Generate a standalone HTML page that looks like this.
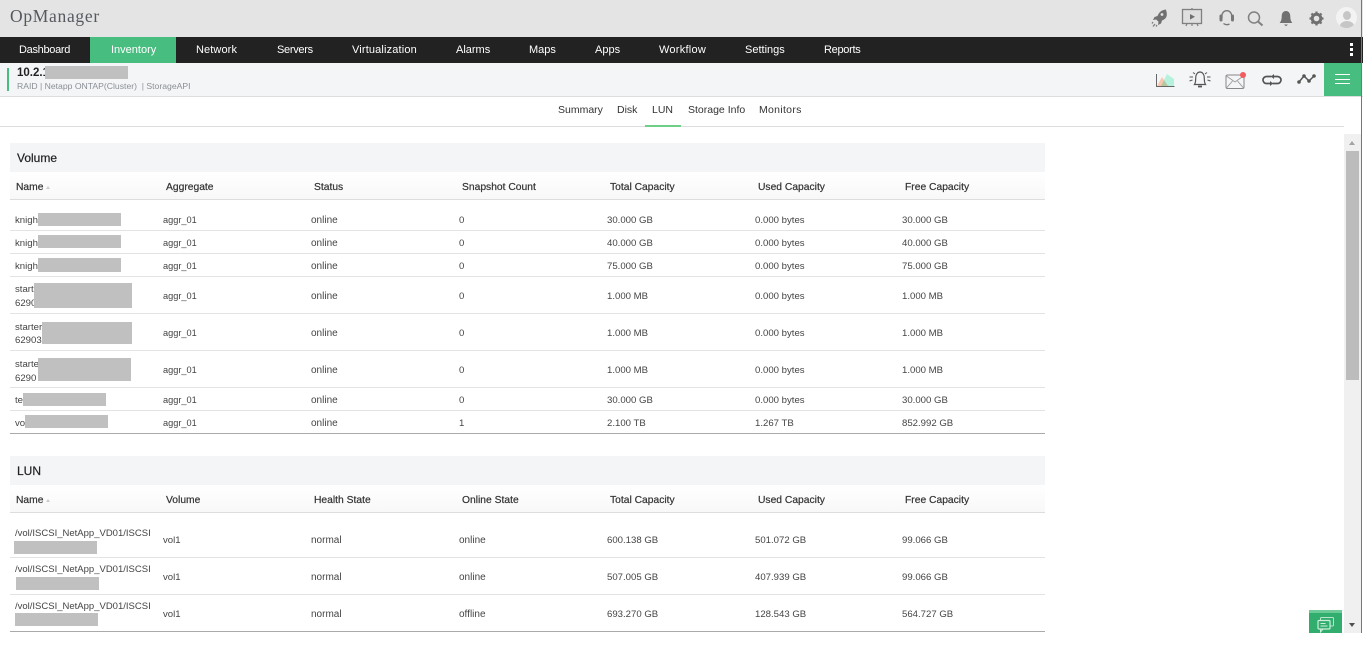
<!DOCTYPE html>
<html><head><meta charset="utf-8"><title>OpManager</title>
<style>
*{box-sizing:border-box}
html,body{margin:0;padding:0;width:1363px;height:670px;overflow:hidden;background:#fff}
body{position:relative;font-family:"Liberation Sans",sans-serif;color:#333}
.a{position:absolute;white-space:nowrap}
.b{position:absolute}
.nav{position:absolute;top:38px;height:26px;line-height:24px;font-size:11px;color:#fff;white-space:nowrap}
.t{position:absolute;font-size:9.6px;line-height:14px;color:#444;white-space:nowrap;margin-top:2px}
.t.o{font-size:10px}
.t.x{font-size:9.2px;margin-top:1px}
.t.l{font-size:9.5px;margin-top:1px}
.h{position:absolute;font-size:10.3px;line-height:14px;font-weight:400;color:#333;white-space:nowrap;-webkit-text-stroke:.2px #333;margin-top:2px}
.r{position:absolute;left:10px;width:1035px;height:1px;background:#e3e3e3}
.g{position:absolute;background:#c0c0c0}
.tab{position:absolute;top:103px;font-size:10.5px;line-height:14px;color:#333;white-space:nowrap}
</style></head><body>
<div class="b" style="left:0;top:0;width:1363px;height:37px;background:#e4e4e4"></div>
<div class="a" style="left:10px;top:6px;font:17.5px/21px 'Liberation Serif',serif;color:#55595f;letter-spacing:.7px">OpManager</div>

<svg class="b" style="left:1150px;top:6px" width="190" height="26" viewBox="0 0 190 26">
<path d="M16 3.500c-4 .3-7 2.500-8.500 6.500l-3 1-1.500 3 3.200-.5 2.300 2.300-.5 3.200 3-1.500 1-3c4-1.500 6.200-4.500 4-10.500z" fill="#707070"/>
<circle cx="12" cy="8.500" r="1.400" fill="#e4e4e4"/>
<path d="M3 16l-1 1.500M5 18l-2 2.500M7 19l-1 1.500" stroke="#808080" stroke-width="1.300" fill="none"/>
<rect x="32.500" y="3.500" width="19" height="14" fill="#dfdfdf" stroke="#808080" stroke-width="1.300"/>
<path d="M42 2v1.500M37 17.500l-1 2.500M47 17.500l1 2.500M42 17.500v2.500" stroke="#808080" stroke-width="1.200"/>
<path d="M40 8l5 2.800-5 2.800z" fill="#707070"/>
<path d="M72 12v-2.500a4.800 4.800 0 0 1 9.600 0v2.500" stroke="#777" stroke-width="1.300" fill="none"/>
<rect x="69.500" y="8.500" width="3" height="7" rx="1.500" fill="#777"/><rect x="81" y="8.500" width="3" height="7" rx="1.500" fill="#777"/>
<path d="M73.500 17.500c2 1.500 4 1.500 6 .5" stroke="#777" stroke-width="1.300" fill="none"/>
<circle cx="104" cy="11.500" r="5.500" fill="none" stroke="#808080" stroke-width="1.500"/>
<path d="M108 15.500l4.500 4" stroke="#808080" stroke-width="2"/>
<path d="M136 5c-3 0-4.300 2.500-4.300 5.500 0 3.500-1 5-2 6.500h12.600c-1-1.500-2-3-2-6.500 0-3-1.300-5.500-4.300-5.500z" fill="#707070"/>
<path d="M134 18.500h4l-2 1.800z" fill="#707070"/>
<circle cx="166.500" cy="12.500" r="4.300" fill="none" stroke="#707070" stroke-width="3"/>
<path d="M166.500 5.500v3M166.500 16.500v3M159.500 12.500h3M170.500 12.500h3M161.500 7.500l2.100 2.100M169.400 15.400l2.100 2.100M161.500 17.500l2.100-2.100M169.400 9.600l2.100-2.100" stroke="#707070" stroke-width="2.200"/>
</svg>
<div class="b" style="left:1336px;top:7px;width:21px;height:21px;border-radius:50%;background:#f3f3f3;overflow:hidden">
<div class="b" style="left:6.500px;top:4px;width:8px;height:9px;border-radius:50%;background:#c6c6c6"></div>
<div class="b" style="left:3.500px;top:14px;width:14px;height:10px;border-radius:50% 50% 0 0;background:#c6c6c6"></div>
</div>

<div class="b" style="left:0;top:37px;width:1363px;height:26px;background:#222"></div>
<div class="b" style="left:90px;top:37px;width:86px;height:26px;background:#48bd80"></div>
<div class="nav" style="left:19px;letter-spacing:-.3px">Dashboard</div>
<div class="nav" style="left:111px">Inventory</div>
<div class="nav" style="left:196px;letter-spacing:.1px">Network</div>
<div class="nav" style="left:277px;letter-spacing:-.3px">Servers</div>
<div class="nav" style="left:352px;letter-spacing:.15px">Virtualization</div>
<div class="nav" style="left:456px">Alarms</div>
<div class="nav" style="left:529px">Maps</div>
<div class="nav" style="left:595px">Apps</div>
<div class="nav" style="left:659px;letter-spacing:.25px">Workflow</div>
<div class="nav" style="left:745px">Settings</div>
<div class="nav" style="left:824px;letter-spacing:-.3px">Reports</div>
<div class="b" style="left:1350px;top:43px;width:3px;height:3px;background:#fff"></div>
<div class="b" style="left:1350px;top:48px;width:3px;height:3px;background:#fff"></div>
<div class="b" style="left:1350px;top:53px;width:3px;height:3px;background:#fff"></div>

<div class="b" style="left:0;top:63px;width:1363px;height:34px;background:#f4f5f7;border-bottom:1px solid #ddd"></div>
<div class="b" style="left:7px;top:68px;width:2px;height:23px;background:#48bd80"></div>
<div class="a" style="left:17px;top:66px;font-size:11.5px;line-height:14px;font-weight:bold;color:#222">10.2.1</div>
<div class="g" style="left:45px;top:66px;width:83px;height:13px"></div>
<div class="a" style="left:17px;top:80px;font-size:8.65px;line-height:13px;color:#8a8f94">RAID | Netapp ONTAP(Cluster) &nbsp;| StorageAPI</div>

<svg class="b" style="left:1150px;top:66px" width="170" height="30" viewBox="0 0 170 30">
<path d="M7 20l5-9 6 9z" fill="#f9c8ae"/><path d="M11 20l6-12 7 5v7z" fill="#b5f2dd"/><path d="M11 20l3-6 4 6z" fill="#b8c5a0"/>
<path d="M6.500 8v12.500H24.500" stroke="#666" stroke-width="1" fill="none"/>
<path d="M44.500 18.500c1-1.500 1.200-3 1.200-6.500 0-3.500 1.800-6 4.300-6s4.300 2.500 4.300 6c0 3.500.2 5 1.200 6.500z" fill="none" stroke="#555" stroke-width="1.200"/>
<path d="M48 20.500h4" stroke="#555" stroke-width="1.800"/>
<path d="M39.500 11h3.500M39.500 15l3-1M57 11h3.500M57.500 14l3 1M43 6.500l2 1.500M57 6.500l-2 1.500" stroke="#555" stroke-width="1"/>
<rect x="76" y="9" width="18" height="13.500" rx="1.500" fill="none" stroke="#888" stroke-width="1"/>
<path d="M76.500 10l8.500 6 8.500-6M76.500 22l6-7M93.500 22l-6-7" fill="none" stroke="#999" stroke-width=".9"/>
<circle cx="93" cy="9" r="3" fill="#f45b5f"/>
<path d="M123 10.500h4.500a3.500 3.500 0 0 1 0 7h-5M120 17.500h-3.500a3.500 3.500 0 0 1 0-7h5" fill="none" stroke="#555" stroke-width="1.700"/>
<path d="M124 8v5l-3-2.500zM120 15v5l3-2.500z" fill="#555"/>
<path d="M149 16l5-6 5 5 5-5" fill="none" stroke="#555" stroke-width="1.500"/>
<circle cx="149" cy="16" r="1.800" fill="#555"/><circle cx="154" cy="10" r="1.800" fill="#555"/><circle cx="159" cy="15" r="1.800" fill="#555"/><circle cx="164" cy="10" r="1.800" fill="#555"/>
</svg>
<div class="b" style="left:1324px;top:63px;width:37px;height:33px;background:#48bd80"></div>
<div class="b" style="left:1335px;top:74px;width:15px;height:1px;background:#fff"></div>
<div class="b" style="left:1335px;top:79px;width:15px;height:1px;background:#fff"></div>
<div class="b" style="left:1335px;top:83px;width:15px;height:1px;background:#fff"></div>

<div class="tab" style="left:558px">Summary</div>
<div class="tab" style="left:617px">Disk</div>
<div class="tab" style="left:652px">LUN</div>
<div class="tab" style="left:688px">Storage Info</div>
<div class="tab" style="left:759px;letter-spacing:.3px">Monitors</div>
<div class="b" style="left:0;top:126px;width:1344px;height:1px;background:#ddd"></div>
<div class="b" style="left:645px;top:125px;width:36px;height:2px;background:#6fcf86"></div>

<!-- Volume -->
<div class="b" style="left:10px;top:143px;width:1035px;height:29px;background:#f4f5f7"></div>
<div class="a" style="left:17px;top:151px;font-size:12px;line-height:15px;color:#222;-webkit-text-stroke:.2px #222">Volume</div>
<div class="b" style="left:10px;top:172px;width:1035px;height:27px;background:linear-gradient(#fff,#f8f8f8)"></div>
<div class="b" style="left:10px;top:199px;width:1035px;height:1px;background:#ddd"></div>
<div class="h" style="left:16px;top:179px">Name</div>
<div class="b" style="left:46px;top:186px;border:2.5px solid transparent;border-top:0;border-bottom:3px solid #ccc"></div>
<div class="h" style="left:166px;top:179px">Aggregate</div>
<div class="h" style="left:314px;top:179px">Status</div>
<div class="h" style="left:462px;top:179px">Snapshot Count</div>
<div class="h" style="left:610px;top:179px">Total Capacity</div>
<div class="h" style="left:758px;top:179px">Used Capacity</div>
<div class="h" style="left:905px;top:179px">Free Capacity</div>

<div class="t" style="left:15px;top:212px">knight</div><div class="g" style="left:38px;top:213px;width:83px;height:13px"></div>
<div class="t x" style="left:163px;top:212px">aggr_01</div><div class="t o" style="left:311px;top:212px">online</div><div class="t" style="left:459px;top:212px">0</div><div class="t" style="left:607px;top:212px">30.000 GB</div><div class="t" style="left:755px;top:212px">0.000 bytes</div><div class="t" style="left:902px;top:212px">30.000 GB</div>
<div class="r" style="top:230px"></div>

<div class="t" style="left:15px;top:235px">knight</div><div class="g" style="left:38px;top:235px;width:83px;height:13px"></div>
<div class="t x" style="left:163px;top:235px">aggr_01</div><div class="t o" style="left:311px;top:235px">online</div><div class="t" style="left:459px;top:235px">0</div><div class="t" style="left:607px;top:235px">40.000 GB</div><div class="t" style="left:755px;top:235px">0.000 bytes</div><div class="t" style="left:902px;top:235px">40.000 GB</div>
<div class="r" style="top:253px"></div>

<div class="t" style="left:15px;top:258px">knight</div><div class="g" style="left:38px;top:258px;width:83px;height:14px"></div>
<div class="t x" style="left:163px;top:258px">aggr_01</div><div class="t o" style="left:311px;top:258px">online</div><div class="t" style="left:459px;top:258px">0</div><div class="t" style="left:607px;top:258px">75.000 GB</div><div class="t" style="left:755px;top:258px">0.000 bytes</div><div class="t" style="left:902px;top:258px">75.000 GB</div>
<div class="r" style="top:276px"></div>

<div class="t" style="left:15px;top:281px">starter</div><div class="t" style="left:15px;top:295px">62903</div><div class="g" style="left:34px;top:283px;width:98px;height:25px"></div>
<div class="t x" style="left:163px;top:288px">aggr_01</div><div class="t o" style="left:311px;top:288px">online</div><div class="t" style="left:459px;top:288px">0</div><div class="t" style="left:607px;top:288px">1.000 MB</div><div class="t" style="left:755px;top:288px">0.000 bytes</div><div class="t" style="left:902px;top:288px">1.000 MB</div>
<div class="r" style="top:313px"></div>

<div class="t" style="left:15px;top:319px">starter</div><div class="t" style="left:15px;top:332px">62903</div><div class="g" style="left:42px;top:322px;width:90px;height:22px"></div>
<div class="t x" style="left:163px;top:325px">aggr_01</div><div class="t o" style="left:311px;top:325px">online</div><div class="t" style="left:459px;top:325px">0</div><div class="t" style="left:607px;top:325px">1.000 MB</div><div class="t" style="left:755px;top:325px">0.000 bytes</div><div class="t" style="left:902px;top:325px">1.000 MB</div>
<div class="r" style="top:350px"></div>

<div class="t" style="left:15px;top:356px">starter</div><div class="t" style="left:15px;top:370px">6290</div><div class="g" style="left:38px;top:358px;width:93px;height:23px"></div>
<div class="t x" style="left:163px;top:362px">aggr_01</div><div class="t o" style="left:311px;top:362px">online</div><div class="t" style="left:459px;top:362px">0</div><div class="t" style="left:607px;top:362px">1.000 MB</div><div class="t" style="left:755px;top:362px">0.000 bytes</div><div class="t" style="left:902px;top:362px">1.000 MB</div>
<div class="r" style="top:387px"></div>

<div class="t" style="left:15px;top:392px">te</div><div class="g" style="left:23px;top:393px;width:83px;height:13px"></div>
<div class="t x" style="left:163px;top:392px">aggr_01</div><div class="t o" style="left:311px;top:392px">online</div><div class="t" style="left:459px;top:392px">0</div><div class="t" style="left:607px;top:392px">30.000 GB</div><div class="t" style="left:755px;top:392px">0.000 bytes</div><div class="t" style="left:902px;top:392px">30.000 GB</div>
<div class="r" style="top:410px"></div>

<div class="t" style="left:15px;top:415px">vol</div><div class="g" style="left:25px;top:415px;width:83px;height:13px"></div>
<div class="t x" style="left:163px;top:415px">aggr_01</div><div class="t o" style="left:311px;top:415px">online</div><div class="t" style="left:459px;top:415px">1</div><div class="t" style="left:607px;top:415px">2.100 TB</div><div class="t" style="left:755px;top:415px">1.267 TB</div><div class="t" style="left:902px;top:415px">852.992 GB</div>
<div class="r" style="top:433px;background:#aaa"></div>

<!-- LUN -->
<div class="b" style="left:10px;top:456px;width:1035px;height:29px;background:#f4f5f7"></div>
<div class="a" style="left:17px;top:464px;font-size:12px;line-height:15px;color:#222;-webkit-text-stroke:.2px #222">LUN</div>
<div class="b" style="left:10px;top:485px;width:1035px;height:27px;background:linear-gradient(#fff,#f8f8f8)"></div>
<div class="b" style="left:10px;top:512px;width:1035px;height:1px;background:#ddd"></div>
<div class="h" style="left:16px;top:492px">Name</div>
<div class="b" style="left:46px;top:499px;border:2.5px solid transparent;border-top:0;border-bottom:3px solid #ccc"></div>
<div class="h" style="left:166px;top:492px">Volume</div>
<div class="h" style="left:314px;top:492px">Health State</div>
<div class="h" style="left:462px;top:492px">Online State</div>
<div class="h" style="left:610px;top:492px">Total Capacity</div>
<div class="h" style="left:758px;top:492px">Used Capacity</div>
<div class="h" style="left:905px;top:492px">Free Capacity</div>

<div class="t l" style="left:15px;top:526px">/vol/ISCSI_NetApp_VD01/ISCSI</div><div class="g" style="left:14px;top:541px;width:83px;height:13px"></div>
<div class="t" style="left:163px;top:532px">vol1</div><div class="t o" style="left:311px;top:532px">normal</div><div class="t o" style="left:459px;top:532px">online</div><div class="t" style="left:607px;top:532px">600.138 GB</div><div class="t" style="left:755px;top:532px">501.072 GB</div><div class="t" style="left:902px;top:532px">99.066 GB</div>
<div class="r" style="top:557px"></div>

<div class="t l" style="left:15px;top:562px">/vol/ISCSI_NetApp_VD01/ISCSI</div><div class="g" style="left:16px;top:577px;width:83px;height:13px"></div>
<div class="t" style="left:163px;top:569px">vol1</div><div class="t o" style="left:311px;top:569px">normal</div><div class="t o" style="left:459px;top:569px">online</div><div class="t" style="left:607px;top:569px">507.005 GB</div><div class="t" style="left:755px;top:569px">407.939 GB</div><div class="t" style="left:902px;top:569px">99.066 GB</div>
<div class="r" style="top:594px"></div>

<div class="t l" style="left:15px;top:599px">/vol/ISCSI_NetApp_VD01/ISCSI</div><div class="g" style="left:15px;top:613px;width:83px;height:13px"></div>
<div class="t" style="left:163px;top:606px">vol1</div><div class="t o" style="left:311px;top:606px">normal</div><div class="t o" style="left:459px;top:606px">offline</div><div class="t" style="left:607px;top:606px">693.270 GB</div><div class="t" style="left:755px;top:606px">128.543 GB</div><div class="t" style="left:902px;top:606px">564.727 GB</div>
<div class="r" style="top:631px;background:#aaa"></div>

<!-- Scrollbar -->
<div class="b" style="left:1344px;top:134px;width:17px;height:499px;background:#f0f0f0"></div>
<div class="b" style="left:1346px;top:151px;width:13px;height:229px;background:#bcbcbc"></div>
<div class="b" style="left:1349px;top:141px;border:3.5px solid transparent;border-top:0;border-bottom:4px solid #a3a3a3"></div>
<div class="b" style="left:1349px;top:623px;border:3.5px solid transparent;border-bottom:0;border-top:4px solid #505050"></div>
<div class="b" style="left:1361px;top:0;width:1px;height:633px;background:#3b86c8"></div>

<!-- Chat -->
<div class="b" style="left:1309px;top:610px;width:33px;height:23px;background:#31ad6d;border-top:3px solid #6ccb97"></div>
<svg class="b" style="left:1317px;top:616px" width="20" height="18" viewBox="0 0 20 18">
<rect x="3.500" y="1.500" width="13" height="8.500" rx="1" fill="none" stroke="#b7e4cb" stroke-width="1"/>
<rect x="1" y="4.500" width="12" height="8.500" rx="1" fill="#31ad6d" stroke="#cdeedc" stroke-width="1.200"/>
<path d="M3.500 13v3l2.500-3M3.500 7.500h5M3.500 10h7" fill="none" stroke="#cdeedc" stroke-width="1"/>
</svg>
</body></html>
